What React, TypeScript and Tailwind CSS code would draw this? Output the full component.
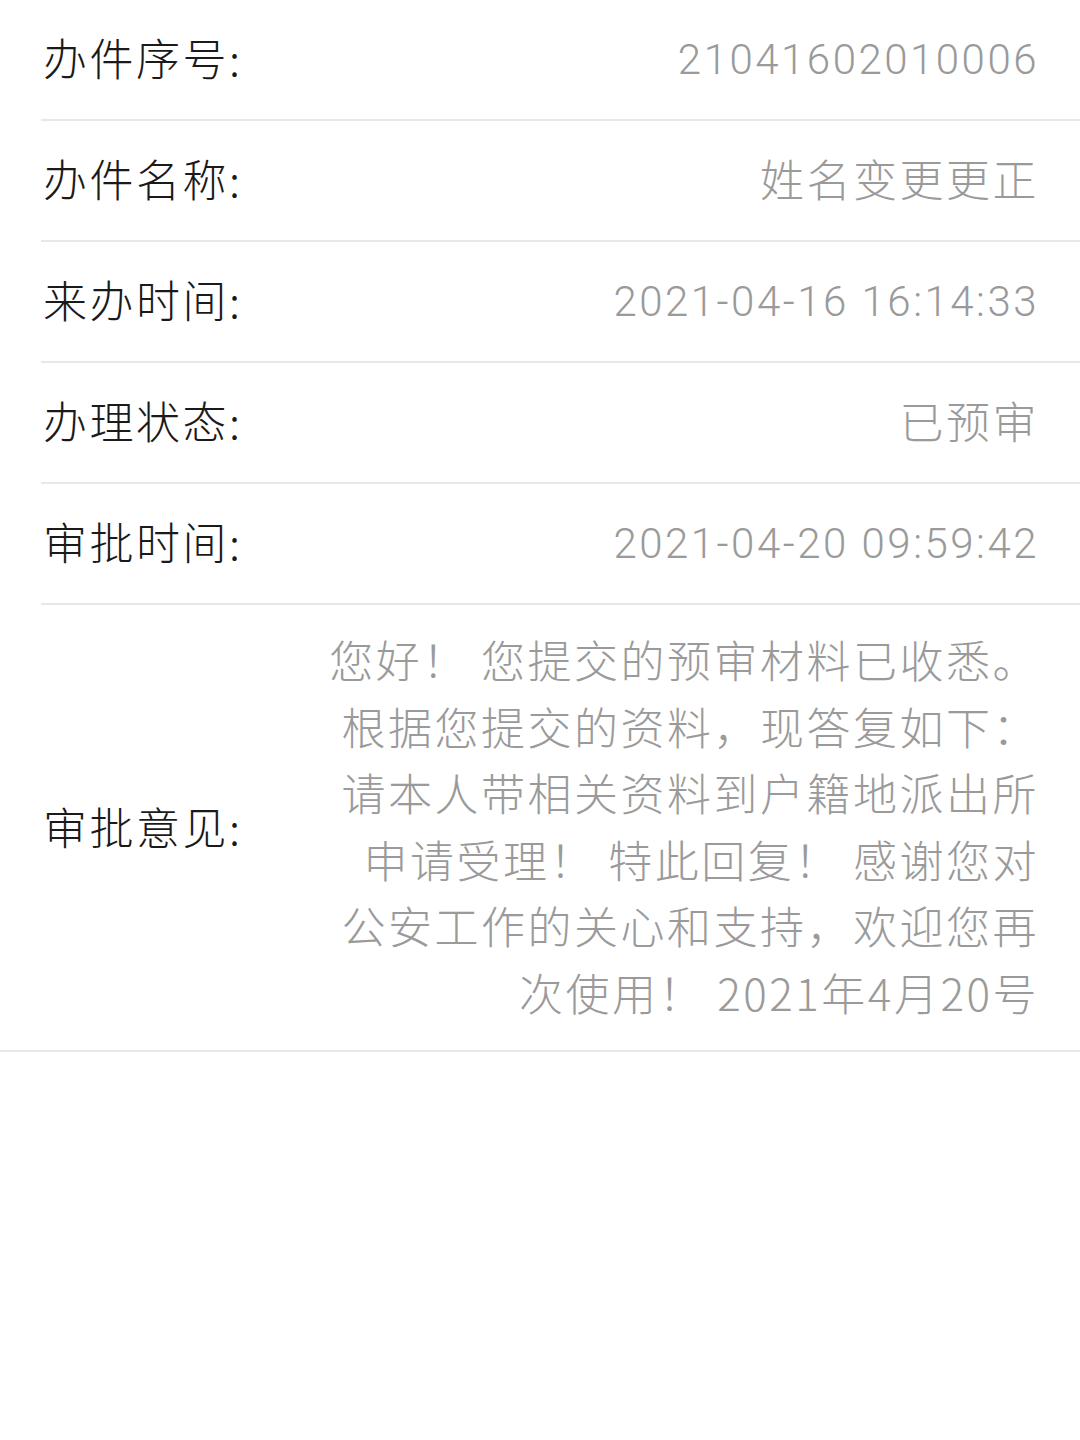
const rows = [
  { label: "办件序号:", value: "21041602010006", num: true },
  { label: "办件名称:", value: "姓名变更更正" },
  { label: "来办时间:", value: "2021-04-16 16:14:33", num: true },
  { label: "办理状态:", value: "已预审" },
  { label: "审批时间:", value: "2021-04-20 09:59:42", num: true },
];

const opinion = [
  "您好！ 您提交的预审材料已收悉。",
  "根据您提交的资料，现答复如下：",
  "请本人带相关资料到户籍地派出所",
  "申请受理！ 特此回复！ 感谢您对",
  "公安工作的关心和支持，欢迎您再",
  "次使用！ 2021年4月20号",
];

export default function App() {
  return (
    <div
      className="min-h-[1440px] bg-white text-[44px] tracking-[2.5px]"
      style={{ fontFamily: '"Noto Sans CJK SC", "Noto Sans", sans-serif' }}
    >
      {rows.map((r) => (
        <div key={r.label} className="ml-[41px] flex h-[121px] items-center justify-between border-b-2 border-[#e8e8e8] pr-[41px] pl-[2px]">
          <span className="-mt-[6px] font-light text-[#1a1a1a]">{r.label}</span>
          {r.num ? (
            <span
              className="text-[42px] font-light tracking-[2.5px] text-[#9a9a9a]"
              style={{ fontFamily: "Roboto, sans-serif" }}
            >
              {r.value}
            </span>
          ) : (
            <span className="-mt-[6px] font-light text-[#9a9a9a]">{r.value}</span>
          )}
        </div>
      ))}
      <div className="flex items-center justify-between border-b-2 border-[#e8e8e8] pt-[21px] pb-[24px] pr-[41px] pl-[43px]">
        <span className="font-light text-[#1a1a1a]">审批意见:</span>
        <div className="text-right leading-[66.6px] font-light text-[#9a9a9a]">
          {opinion.map((l) => (
            <div key={l}>{l}</div>
          ))}
        </div>
      </div>
    </div>
  );
}
